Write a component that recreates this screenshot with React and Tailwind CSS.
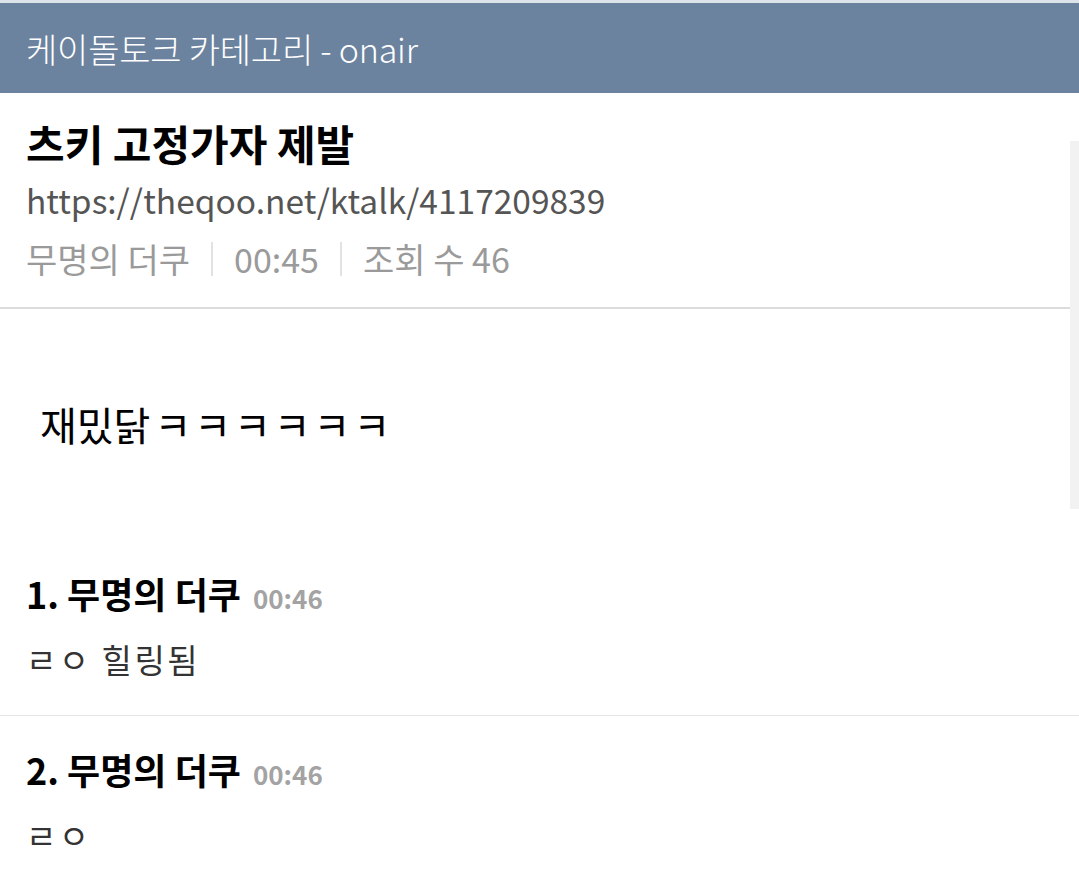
const font = { fontFamily: '"Noto Sans CJK KR", "Noto Sans", sans-serif' };

function Comment({ no, time, text, last }) {
  return (
    <div className={last ? "px-[26px] pt-[29px]" : "px-[26px] pt-[31px] pb-[32px] border-b border-[#e4e4e4]"}>
      <div className="flex items-baseline gap-[12px]">
        <span className="text-[36px] leading-[48px] font-bold text-black">{no}. 무명의 더쿠</span>
        <span className="text-[26px] font-bold text-[#a3a3a3]">{time}</span>
      </div>
      <p className="mt-[18px] text-[33px] leading-[48px] text-[#333333] tracking-[2.5px]">{text}</p>
    </div>
  );
}

export default function App() {
  return (
    <div className="relative w-[1079px] min-h-[885px] bg-white" style={font}>
      <div className="h-[3px] bg-[#dde3ea]" />
      <header className="h-[90px] bg-[#6c839f] flex items-center px-[26px]">
        <h1 className="text-[34px] font-light text-white tracking-[-0.2px]">케이돌토크 카테고리 - onair</h1>
      </header>

      <section className="px-[26px] pt-[24px] pb-[20px] border-b-2 border-[#dcdcdc]">
        <h2 className="text-[42px] leading-[52px] font-bold text-black">츠키 고정가자 제발</h2>
        <p className="text-[33.5px] leading-[62px] text-[#555555]">https://theqoo.net/ktalk/4117209839</p>
        <div className="flex items-center text-[34px] leading-[56px] text-[#9a9a9a]">
          <span>무명의 더쿠</span>
          <span className="mx-[21px] w-[2px] h-[34px] bg-[#e2e2e2]" />
          <span>00:45</span>
          <span className="mx-[21px] w-[2px] h-[34px] bg-[#e2e2e2]" />
          <span>조회 수 46</span>
        </div>
      </section>

      <div className="absolute right-0 top-[141px] w-[9px] h-[368px] bg-[#f2f2f2]" />

      <article className="pl-[40px] pt-[90px]">
        <p className="text-[40px] leading-[50px] text-black">
          재밌닭<span className="ml-[4px] tracking-[3px]">ㅋㅋㅋㅋㅋㅋ</span>
        </p>
      </article>

      <div className="mt-[89px]">
        <Comment no={1} time="00:46" text="ㄹㅇ 힐링됨" />
        <Comment no={2} time="00:46" text="ㄹㅇ" last />
      </div>
    </div>
  );
}
